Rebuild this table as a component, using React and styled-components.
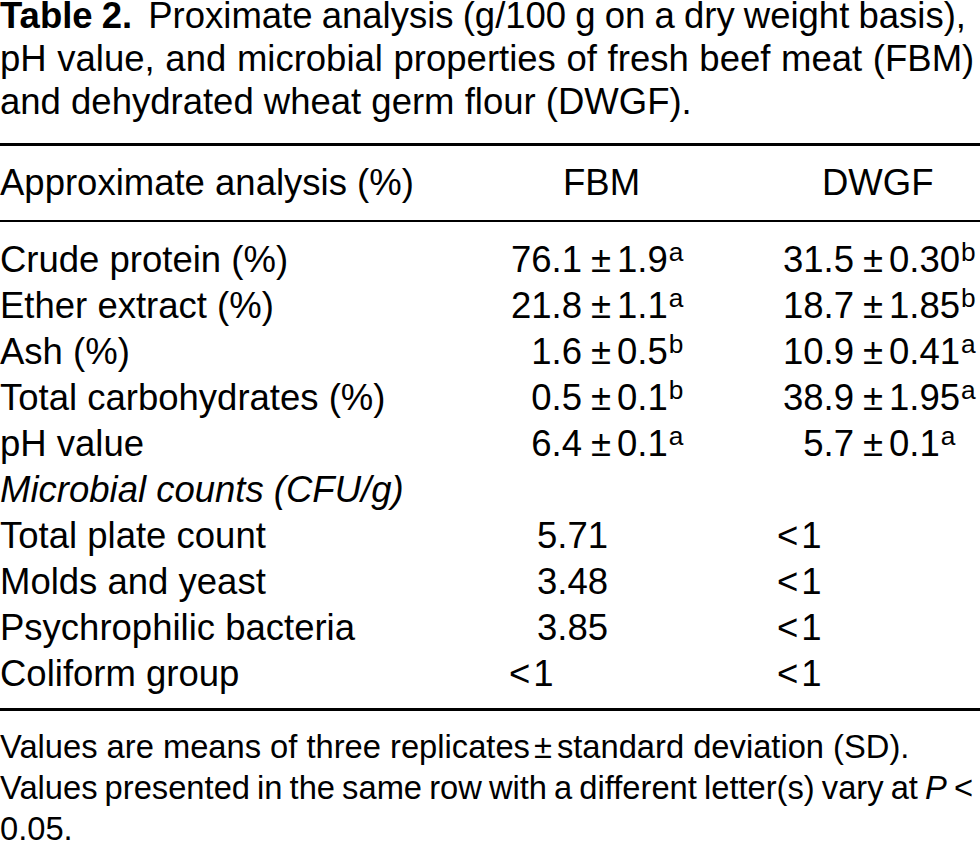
import React from 'react';
import styled, { createGlobalStyle } from 'styled-components';

const Global = createGlobalStyle`
  html, body { margin: 0; padding: 0; background: #fff; }
  body {
    font-family: "Liberation Sans", Arial, Helvetica, sans-serif;
    color: #000;
  }
`;

const Page = styled.div`
  width: 980px;
  height: 841px;
  overflow: hidden;
`;

const Caption = styled.div`
  font-size: 36.5px;
  line-height: 43px;
  margin-top: -6px;
  white-space: nowrap;
`;

const CaptionLine = styled.div`
  word-spacing: ${(p) => p.$ws || 0}px;
`;

const Label = styled.b`
  font-weight: 700;
  margin-right: 16px;
`;

const Table = styled.div`
  margin-top: 20px;
  border-top: 3px solid #000;
  border-bottom: 3px solid #000;
  font-size: 36.5px;
  white-space: nowrap;
`;

const Head = styled.div`
  padding: 14px 0;
  border-bottom: 2px solid #000;
`;

const Body = styled.div`
  padding: 14.5px 0 11.5px;
`;

const Row = styled.div`
  display: grid;
  grid-template-columns: 490px 270px 1fr;
  height: 46px;
  line-height: 46px;
`;

const Cell = styled.div`
  padding-left: ${(p) => p.$indent || 0}px;
  font-style: ${(p) => (p.$italic ? 'italic' : 'normal')};
`;

const ValueCell = styled.div`
  display: flex;
`;

const Lead = styled.span`
  width: ${(p) => p.$w}px;
  text-align: right;
`;

const Pm = styled.span`
  margin: 0 6px 0 9px;
`;

const Sup = styled.span`
  font-size: 0.72em;
  line-height: 0;
  vertical-align: 11px;
  margin-left: 1px;
`;

const Lt = styled.span`
  margin-right: 3px;
`;

const Notes = styled.div`
  margin-top: 15px;
  font-size: 32.7px;
  line-height: 41px;
  white-space: nowrap;
`;

const NoteLine = styled.div`
  word-spacing: ${(p) => p.$ws || 0}px;
`;

const Ital = styled.i`
  font-style: italic;
`;

const PmSmall = styled.span`
  margin: 0 5px 0 4px;
`;

const rows = [
  { label: 'Crude protein (%)', fbm: ['76.1', '1.9', 'a'], dwgf: ['31.5', '0.30', 'b'] },
  { label: 'Ether extract (%)', fbm: ['21.8', '1.1', 'a'], dwgf: ['18.7', '1.85', 'b'] },
  { label: 'Ash (%)', fbm: ['1.6', '0.5', 'b'], dwgf: ['10.9', '0.41', 'a'] },
  { label: 'Total carbohydrates (%)', fbm: ['0.5', '0.1', 'b'], dwgf: ['38.9', '1.95', 'a'] },
  { label: 'pH value', fbm: ['6.4', '0.1', 'a'], dwgf: ['5.7', '0.1', 'a'] },
];

const counts = [
  { label: 'Total plate count', fbm: '5.71', fIndent: 47 },
  { label: 'Molds and yeast', fbm: '3.48', fIndent: 47 },
  { label: 'Psychrophilic bacteria', fbm: '3.85', fIndent: 47 },
  { label: 'Coliform group', fbm: null, fIndent: 19 },
];

function Value({ v, lead }) {
  return (
    <ValueCell>
      <Lead $w={lead}>{v[0]}</Lead>
      <Pm>±</Pm>
      <span>
        {v[1]}
        <Sup>{v[2]}</Sup>
      </span>
    </ValueCell>
  );
}

function LessOne({ indent }) {
  return (
    <Cell $indent={indent}>
      <Lt>&lt;</Lt>1
    </Cell>
  );
}

export default function App() {
  return (
    <Page>
      <Global />
      <Caption>
        <CaptionLine $ws={-1}>
          <Label>Table 2.</Label>Proximate analysis (g/100 g on a dry weight basis),
        </CaptionLine>
        <CaptionLine $ws={0.5}>pH value, and microbial properties of fresh beef meat (FBM)</CaptionLine>
        <CaptionLine>and dehydrated wheat germ flour (DWGF).</CaptionLine>
      </Caption>
      <Table>
        <Head>
          <Row>
            <Cell>Approximate analysis (%)</Cell>
            <Cell $indent={73}>FBM</Cell>
            <Cell $indent={62}>DWGF</Cell>
          </Row>
        </Head>
        <Body>
          {rows.map((r) => (
            <Row key={r.label}>
              <Cell>{r.label}</Cell>
              <Value v={r.fbm} lead={92} />
              <Value v={r.dwgf} lead={94} />
            </Row>
          ))}
          <Row>
            <Cell $italic>Microbial counts (CFU/g)</Cell>
            <Cell />
            <Cell />
          </Row>
          {counts.map((c) => (
            <Row key={c.label}>
              <Cell>{c.label}</Cell>
              {c.fbm ? <Cell $indent={c.fIndent}>{c.fbm}</Cell> : <LessOne indent={c.fIndent} />}
              <LessOne indent={17} />
            </Row>
          ))}
        </Body>
      </Table>
      <Notes>
        <NoteLine>
          Values are means of three replicates<PmSmall>±</PmSmall>standard deviation (SD).
        </NoteLine>
        <NoteLine $ws={-2}>
          Values presented in the same row with a different letter(s) vary at <Ital>P</Ital> &lt;
        </NoteLine>
        <NoteLine>0.05.</NoteLine>
      </Notes>
    </Page>
  );
}
